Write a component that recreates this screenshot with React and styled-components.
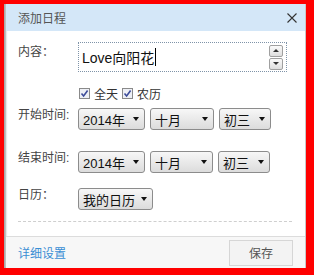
import React from "react";
import styled, { createGlobalStyle } from "styled-components";

const Global = createGlobalStyle`
  html, body {
    margin: 0;
    padding: 0;
    background: #ffffff;
  }
  body {
    font-family: "Liberation Sans", "Noto Sans CJK SC", sans-serif;
  }
`;

const Frame = styled.div`
  box-sizing: border-box;
  width: 314px;
  height: 275px;
  border-style: solid;
  border-color: #ff0000;
  border-width: 4px 8px 7px 4px;
`;

const Dialog = styled.div`
  height: 100%;
  display: flex;
  flex-direction: column;
  background: #ffffff;
  border-right: 1px solid #c8c8c8;
  box-shadow: inset 2px 0 2px rgba(0, 0, 0, 0.35);
  box-sizing: border-box;
`;

const TitleBar = styled.div`
  height: 27px;
  margin-left: 2px;
  display: flex;
  align-items: center;
  justify-content: space-between;
  padding: 0 8px 0 12px;
  background: #d4e7f8;
  font-size: 12px;
  color: #555;
`;

const Close = styled.svg`
  width: 10px;
  height: 10px;
  display: block;
`;

const Body = styled.div`
  flex: 1;
  display: flex;
  flex-direction: column;
  padding: 11px 13px 0 14px;
`;

const Row = styled.div`
  display: flex;
  align-items: flex-start;
  margin-top: ${(p) => p.$top || 0}px;
`;

const Label = styled.div`
  width: 60px;
  flex: none;
  font-size: 12px;
  line-height: 15px;
  color: #444;
  padding-top: ${(p) => p.$pad || 0}px;
`;

const Field = styled.div`
  box-sizing: border-box;
  width: 209px;
  height: 30px;
  border: 1px dotted #7f93a8;
  display: flex;
  align-items: center;
  justify-content: space-between;
  padding: 0 3px 0 3px;
`;

const FieldText = styled.span`
  font-size: 14px;
  color: #111;
  display: flex;
  align-items: center;
`;

const Caret = styled.span`
  display: inline-block;
  width: 1px;
  height: 18px;
  background: #000;
  margin-left: 1px;
`;

const Spinner = styled.div`
  display: flex;
  flex-direction: column;
  gap: 1px;
`;

const SpinButton = styled.div`
  box-sizing: border-box;
  width: 14px;
  height: 12px;
  border: 1px solid #a0a0a0;
  border-radius: 2px;
  background: linear-gradient(#fbfbfb, #dedede);
  display: flex;
  align-items: center;
  justify-content: center;
  &::after {
    content: "";
    border-left: 3px solid transparent;
    border-right: 3px solid transparent;
    ${(p) =>
      p.$up
        ? "border-bottom: 3px solid #333;"
        : "border-top: 3px solid #333;"}
  }
`;

const CheckRow = styled.div`
  display: flex;
  align-items: center;
  height: 17px;
  margin: 13px 0 0 61px;
  font-size: 12px;
  color: #333;
`;

const CheckBox = styled.svg`
  width: 11px;
  height: 11px;
  display: block;
  margin-right: 4px;
`;

const CheckLabel = styled.span`
  margin-right: 4px;
`;

const Selects = styled.div`
  display: flex;
  gap: ${(p) => p.$gap || 5}px;
`;

const Select = styled.div`
  box-sizing: border-box;
  width: ${(p) => p.$w}px;
  height: 22px;
  border: 1px solid #8c8c8c;
  border-radius: 3px;
  background: linear-gradient(#f7f7f7, #dcdcdc);
  display: flex;
  align-items: center;
  justify-content: space-between;
  padding: 0 5px 0 4px;
  font-size: 13px;
  color: #111;
  &::after {
    content: "";
    border-left: 3.5px solid transparent;
    border-right: 3.5px solid transparent;
    border-top: 4px solid #111;
  }
`;

const Divider = styled.div`
  margin-top: 11px;
  border-top: 1px dashed #cfcfcf;
`;

const Footer = styled.div`
  height: 31px;
  margin-left: 2px;
  border-top: 1px solid #dcdcdc;
  background: #f7f7f7;
  display: flex;
  align-items: center;
  justify-content: space-between;
  padding: 0 12px 0 12px;
`;

const Link = styled.a`
  font-size: 12px;
  color: #3a8ed4;
  text-decoration: none;
`;

const SaveButton = styled.button`
  box-sizing: border-box;
  width: 64px;
  height: 26px;
  border: 1px solid #d6d6d6;
  background: #f3f3f3;
  font-family: "Noto Sans CJK SC", sans-serif;
  font-size: 12px;
  color: #555;
  padding: 0;
`;

const Check = ({ label }) => (
  <>
    <CheckBox viewBox="0 0 11 11">
      <rect x="0.5" y="0.5" width="10" height="10" fill="#eef0f6" stroke="#8a8a8a" />
      <path d="M2.5 5.5 L4.6 8 L8.6 2.6" fill="none" stroke="#3d4c9a" strokeWidth="1.6" />
    </CheckBox>
    <CheckLabel>{label}</CheckLabel>
  </>
);

const DateRow = ({ label, top, widths }) => (
  <Row $top={top}>
    <Label $pad={0}>{label}</Label>
    <Selects>
      <Select $w={widths[0]}>2014年</Select>
      <Select $w={widths[1]}>十月</Select>
      <Select $w={widths[2]}>初三</Select>
    </Selects>
  </Row>
);

export default function App() {
  return (
    <>
      <Global />
      <Frame>
        <Dialog>
          <TitleBar>
            <span>添加日程</span>
            <Close viewBox="0 0 10 10">
              <path d="M0.5 0.5 L9.5 9.5 M9.5 0.5 L0.5 9.5" stroke="#333" strokeWidth="1.1" />
            </Close>
          </TitleBar>
          <Body>
            <Row>
              <Label $pad={3}>内容：</Label>
              <Field>
                <FieldText>
                  Love向阳花
                  <Caret />
                </FieldText>
                <Spinner>
                  <SpinButton $up />
                  <SpinButton />
                </Spinner>
              </Field>
            </Row>
            <CheckRow>
              <Check label="全天" />
              <Check label="农历" />
            </CheckRow>
            <DateRow label="开始时间:" top={6} widths={[67, 64, 52]} />
            <DateRow label="结束时间:" top={21} widths={[67, 63, 52]} />
            <Row $top={15}>
              <Label $pad={0}>日历：</Label>
              <Select $w={75}>我的日历</Select>
            </Row>
            <Divider />
          </Body>
          <Footer>
            <Link href="#">详细设置</Link>
            <SaveButton>保存</SaveButton>
          </Footer>
        </Dialog>
      </Frame>
    </>
  );
}
